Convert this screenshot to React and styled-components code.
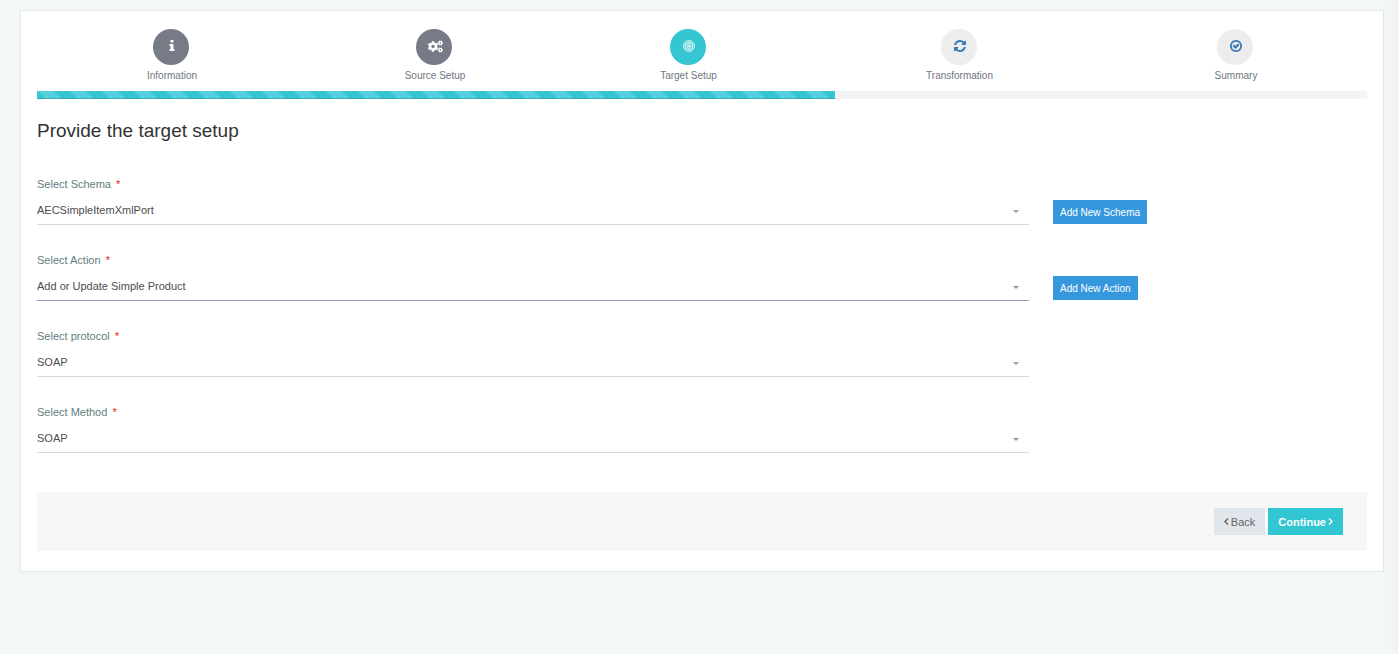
import React, { useState } from 'react'
import styled, { createGlobalStyle } from 'styled-components'
import { FaCogs } from 'react-icons/fa'

const GlobalStyle = createGlobalStyle`
    * {
        box-sizing: border-box;
    }
    body {
        margin: 0;
        background: #f3f7f8 linear-gradient(to left, rgba(0, 0, 0, .02), transparent 8px);
        font-family: "Liberation Sans", Arial, sans-serif;
        font-size: 11px;
        color: #4d4d4d;
    }
    button, select {
        font-family: inherit;
    }
`;
const PageStyled = styled.main`
    padding: 10px 14px 10px 20px;
`;
const CardStyled = styled.form`
    background: #FFFFFF;
    border: 1px solid #e4eaec;
    padding: 18px 16px 20px;
`;
const StepsStyled = styled.ol`
    list-style: none;
    margin: 0;
    padding: 0;
    display: grid;
    grid-template-columns: 270fr 256fr 251fr 291fr 262fr;
`;
const StepLinkStyled = styled.a`
    display: flex;
    flex-direction: column;
    align-items: center;
    color: #6f7780;
    font-size: 10px;
    line-height: 14px;
    text-decoration: none;
`;
const circleColors = {
    done: ['#767b87', '#FFFFFF'],
    active: ['#36c6d3', '#FFFFFF'],
    next: ['#ededed', '#337ab7'],
};
const CircleStyled = styled.span`
    width: 36px;
    height: 36px;
    margin: 0 2px 4px 0;
    padding: 0 0 2px 2px;
    border-radius: 50%;
    display: flex;
    align-items: center;
    justify-content: center;
    background: ${({state}) => circleColors[state][0]};
    color: ${({state}) => circleColors[state][1]};
    svg {
        display: block;
        fill: currentColor;
    }
`;
const ProgressStyled = styled.div`
    height: 8px;
    margin: 8px 0 20px;
    background: #f4f4f4;
`;
const ProgressBarStyled = styled.div`
    height: 100%;
    background-color: #36c6d3;
    background-image: linear-gradient(45deg, rgba(255, 255, 255, .15) 25%, transparent 25%, transparent 50%, rgba(255, 255, 255, .15) 50%, rgba(255, 255, 255, .15) 75%, transparent 75%, transparent);
    background-size: 32px 32px;
    box-shadow: inset 0 -1px 0 rgba(0, 0, 0, .15);
`;
const TitleStyled = styled.h3`
    margin: 0 0 33px;
    font-weight: normal;
    font-size: 19px;
    line-height: 24px;
    color: #333333;
`;
const RowStyled = styled.div`
    display: grid;
    grid-template-columns: 992fr 338fr;
    margin-bottom: 27px;
`;
const FieldStyled = styled.div`
    label {
        display: block;
        margin-bottom: 4px;
        line-height: 16px;
        color: #5f7d80;
    }
    .required {
        margin-left: 2px;
        color: #e02222;
    }
`;
const SelectBoxStyled = styled.div`
    display: flex;
    align-items: center;
    height: 29px;
    padding-right: 10px;
    border-bottom: 1px solid ${({active}) => active ? '#95a0bf' : '#d9d9d9'};
    select {
        flex: 1;
        height: 28px;
        margin-right: -16px;
        padding: 0 16px 0 0;
        border: 0;
        outline: 0;
        appearance: none;
        background: transparent;
        font-size: 11px;
        color: #4d4d4d;
    }
    svg {
        margin-top: 3px;
        fill: #999999;
        pointer-events: none;
    }
`;
const AddButtonStyled = styled.button`
    align-self: end;
    justify-self: start;
    height: 24px;
    margin: 0 0 1px 24px;
    padding: 0 7px;
    border: 0;
    background: #3598dc;
    color: #FFFFFF;
    font-size: 10px;
`;
const ActionsStyled = styled.div`
    display: flex;
    justify-content: flex-end;
    gap: 3px;
    margin-top: 39px;
    padding: 16px 24px;
    background: #f7f7f7;
`;
const ActionButtonStyled = styled.button`
    display: flex;
    align-items: center;
    gap: 2px;
    height: 27px;
    padding: 0 10px;
    border: 0;
    font-size: 11px;
    font-weight: ${({primary}) => primary ? 'bold' : 'normal'};
    background: ${({primary}) => primary ? '#32c5d2' : '#e1e5ec'};
    color: ${({primary}) => primary ? '#FFFFFF' : '#666666'};
    svg {
        fill: none;
        stroke: currentColor;
        stroke-width: 1.4;
    }
`;

const Icon = ({d, size = 14}) => (
    <svg width={size} height={size} viewBox="0 0 1792 1792" aria-hidden="true">
        <path d={d} />
    </svg>
)

const TargetIcon = () => (
    <svg width="12" height="12" viewBox="0 0 12 12" aria-hidden="true">
        <g fill="none" stroke="currentColor" strokeWidth=".9">
            <circle cx="6" cy="6" r="5.4" />
            <circle cx="6" cy="6" r="3.8" />
            <circle cx="6" cy="6" r="2.2" />
        </g>
        <circle cx="6" cy="6" r="1" />
    </svg>
)

const infoPath = 'M1216 1344v128q0 26-19 45t-45 19h-512q-26 0-45-19t-19-45v-128q0-26 19-45t45-19h64v-384h-64q-26 0-45-19t-19-45v-128q0-26 19-45t45-19h384q26 0 45 19t19 45v576h64q26 0 45 19t19 45zm-128-1152v192q0 26-19 45t-45 19h-256q-26 0-45-19t-19-45v-192q0-26 19-45t45-19h256q26 0 45 19t19 45z'
const refreshPath = 'M1639 1056q0 5-1 7-64 268-268 434.5t-478 166.5q-146 0-282.5-55t-243.5-157l-129 129q-19 19-45 19t-45-19-19-45v-448q0-26 19-45t45-19h448q26 0 45 19t19 45-19 45l-137 137q71 66 161 102t187 36q134 0 250-65t186-179q11-17 53-117 8-23 30-23h192q13 0 22.5 9.5t9.5 22.5zm25-800v448q0 26-19 45t-45 19h-448q-26 0-45-19t-19-45 19-45l138-138q-148-137-349-137-134 0-250 65t-186 179q-11 17-53 117-8 23-30 23h-199q-13 0-22.5-9.5t-9.5-22.5v-7q65-268 270-434.5t480-166.5q146 0 284 55.5t245 156.5l130-129q19-19 45-19t45 19 19 45z'
const checkPath = 'M1299 813l-422 422q-19 19-45 19t-45-19l-294-294q-19-19-19-45t19-45l102-102q19-19 45-19t45 19l147 147 275-275q19-19 45-19t45 19l102 102q19 19 19 45t-19 45zm141 83q0-148-73-273t-198-198-273-73-273 73-198 198-73 273 73 273 198 198 273 73 273-73 198-198 73-273zm224 0q0 209-103 385.5t-279.5 279.5-385.5 103-385.5-103-279.5-279.5-103-385.5 103-385.5 279.5-279.5 385.5-103 385.5 103 279.5 279.5 103 385.5z'

const steps = [
    {title: 'Information', state: 'done', icon: <Icon d={infoPath} />},
    {title: 'Source Setup', state: 'done', icon: <FaCogs size={15} />},
    {title: 'Target Setup', state: 'active', icon: <TargetIcon />},
    {title: 'Transformation', state: 'next', icon: <Icon d={refreshPath} />},
    {title: 'Summary', state: 'next', icon: <Icon d={checkPath} />},
]

const fields = [
    {id: 'schema', label: 'Select Schema', options: ['AECSimpleItemXmlPort'], add: 'Add New Schema'},
    {id: 'action', label: 'Select Action', options: ['Add or Update Simple Product'], add: 'Add New Action', active: true},
    {id: 'protocol', label: 'Select protocol', options: ['SOAP', 'REST']},
    {id: 'method', label: 'Select Method', options: ['SOAP', 'REST']},
]

const SelectRow = ({id, label, options, add, active}) => {
    const [value, setValue] = useState(options[0])

    return (
        <RowStyled>
            <FieldStyled>
                <label htmlFor={id}>{label} <span className="required">*</span></label>
                <SelectBoxStyled active={active ? 1 : undefined}>
                    <select id={id} value={value} onChange={e => setValue(e.target.value)}>
                        {options.map(option => <option key={option}>{option}</option>)}
                    </select>
                    <svg width="6" height="3" viewBox="0 0 6 3" aria-hidden="true"><path d="M0 0h6L3 3z" /></svg>
                </SelectBoxStyled>
            </FieldStyled>
            {add && <AddButtonStyled type="button">{add}</AddButtonStyled>}
        </RowStyled>
    )
}

const App = () => {
    return (
        <>
            <GlobalStyle />
            <PageStyled>
                <CardStyled onSubmit={e => e.preventDefault()}>
                    <StepsStyled>
                        {steps.map(({title, state, icon}) => (
                            <li key={title}>
                                <StepLinkStyled href="#">
                                    <CircleStyled state={state}>{icon}</CircleStyled>
                                    {title}
                                </StepLinkStyled>
                            </li>
                        ))}
                    </StepsStyled>
                    <ProgressStyled>
                        <ProgressBarStyled style={{width: `${3 / steps.length * 100}%`}} />
                    </ProgressStyled>
                    <TitleStyled>Provide the target setup</TitleStyled>
                    {fields.map(field => <SelectRow key={field.id} {...field} />)}
                    <ActionsStyled>
                        <ActionButtonStyled type="button">
                            <svg width="5" height="7" viewBox="0 0 5 7" aria-hidden="true"><path d="M4 .5l-3 3 3 3" /></svg>
                            Back
                        </ActionButtonStyled>
                        <ActionButtonStyled type="submit" primary="true">
                            Continue
                            <svg width="5" height="7" viewBox="0 0 5 7" aria-hidden="true"><path d="M1 .5l3 3-3 3" /></svg>
                        </ActionButtonStyled>
                    </ActionsStyled>
                </CardStyled>
            </PageStyled>
        </>
    )
}

export default App
